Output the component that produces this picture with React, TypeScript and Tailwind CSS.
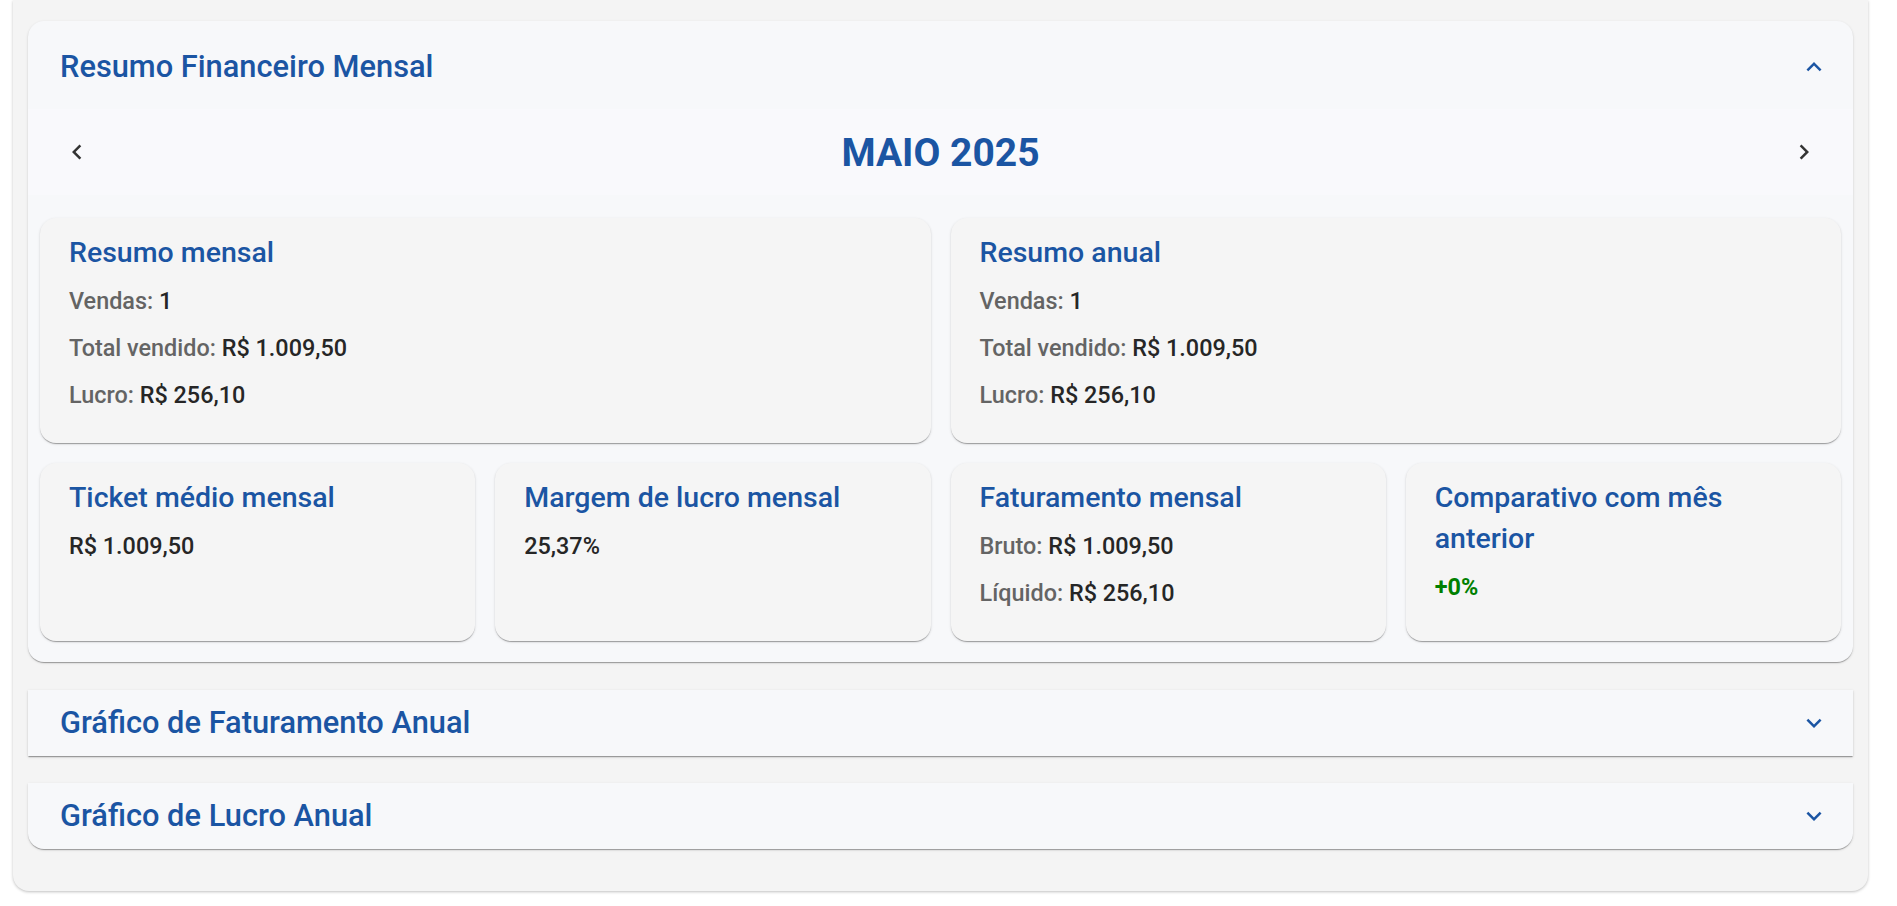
import React from 'react';

const BLUE = 'text-[#1b55a3]';

const ChevronLeftIcon = ({ className }: { className?: string }) => (
  <svg viewBox="0 0 24 24" className={className} fill="currentColor">
    <path d="M15.41 7.41 14 6l-6 6 6 6 1.41-1.41L10.83 12z" />
  </svg>
);

const ChevronRightIcon = ({ className }: { className?: string }) => (
  <svg viewBox="0 0 24 24" className={className} fill="currentColor">
    <path d="M10 6 8.59 7.41 13.17 12l-4.58 4.59L10 18l6-6z" />
  </svg>
);

const ExpandLessIcon = ({ className }: { className?: string }) => (
  <svg viewBox="0 0 24 24" className={className} fill="currentColor">
    <path d="m12 8-6 6 1.41 1.41L12 10.83l4.59 4.58L18 14z" />
  </svg>
);

const ExpandMoreIcon = ({ className }: { className?: string }) => (
  <svg viewBox="0 0 24 24" className={className} fill="currentColor">
    <path d="M16.59 8.59 12 13.17 7.41 8.59 6 10l6 6 6-6z" />
  </svg>
);

interface Linha {
  label?: string;
  value: string;
  destaque?: boolean;
}

const cardShadow =
  'shadow-[0_2px_1px_-1px_rgba(0,0,0,0.2),0_1px_1px_0_rgba(0,0,0,0.14),0_1px_3px_0_rgba(0,0,0,0.12)]';

const ResumoCard: React.FC<{ titulo: string; linhas: Linha[] }> = ({ titulo, linhas }) => (
  <div className={`bg-[#f5f5f5] rounded-[16px] pt-[14px] pb-[31px] px-[29px] ${cardShadow}`}>
    <h3 className={`text-[28.5px] leading-[41px] font-medium ${BLUE}`}>{titulo}</h3>
    <div className="mt-[11px] flex flex-col gap-[13px]">
      {linhas.map((l, i) => (
        <p key={i} className="text-[23.4px] leading-[34px] font-medium">
          {l.label && <span className="text-[#646464]">{l.label} </span>}
          <span className={l.destaque ? 'text-[#008000] font-bold' : 'text-[#262626]'}>{l.value}</span>
        </p>
      ))}
    </div>
  </div>
);

const AccordionHeader: React.FC<{ titulo: string; aberto?: boolean; altura: string }> = ({
  titulo,
  aberto,
  altura,
}) => (
  <div className={`flex items-center justify-between pl-[32px] pr-[24px] ${altura}`}>
    <h2 className={`text-[30.8px] font-medium ${BLUE}`}>{titulo}</h2>
    {aberto ? (
      <ExpandLessIcon className={`w-[30px] h-[30px] ${BLUE}`} />
    ) : (
      <ExpandMoreIcon className={`w-[30px] h-[30px] ${BLUE}`} />
    )}
  </div>
);

export default function App() {
  return (
    <div className="min-h-screen bg-white font-['Roboto',sans-serif]">
      <div className="ml-[13px] w-[1855px] bg-[#f4f4f4] rounded-b-[16px] pt-[21px] pb-[42px] px-[15px] shadow-[0_1px_3px_0_rgba(0,0,0,0.25)]">
        {/* Resumo mensal */}
        <section className={`bg-[#f7f8fa] rounded-[16px] ${cardShadow}`}>
          <AccordionHeader titulo="Resumo Financeiro Mensal" aberto altura="h-[88px] pt-[4px]" />

          <div className="h-[86px] bg-[#f9f9fc] flex items-center justify-between px-[34px]">
            <ChevronLeftIcon className="w-[30px] h-[30px] text-[#333]" />
            <h1 className={`text-[39px] font-bold pt-[2px] ${BLUE}`}>MAIO 2025</h1>
            <ChevronRightIcon className="w-[30px] h-[30px] text-[#333]" />
          </div>

          <div className="px-[12px] pt-[23px] pb-[21px] flex flex-col gap-[20px]">
            <div className="grid grid-cols-2 gap-[20px]">
              <ResumoCard
                titulo="Resumo mensal"
                linhas={[
                  { label: 'Vendas:', value: '1' },
                  { label: 'Total vendido:', value: 'R$ 1.009,50' },
                  { label: 'Lucro:', value: 'R$ 256,10' },
                ]}
              />
              <ResumoCard
                titulo="Resumo anual"
                linhas={[
                  { label: 'Vendas:', value: '1' },
                  { label: 'Total vendido:', value: 'R$ 1.009,50' },
                  { label: 'Lucro:', value: 'R$ 256,10' },
                ]}
              />
            </div>
            <div className="grid grid-cols-4 gap-[20px]">
              <ResumoCard titulo="Ticket médio mensal" linhas={[{ value: 'R$ 1.009,50' }]} />
              <ResumoCard titulo="Margem de lucro mensal" linhas={[{ value: '25,37%' }]} />
              <ResumoCard
                titulo="Faturamento mensal"
                linhas={[
                  { label: 'Bruto:', value: 'R$ 1.009,50' },
                  { label: 'Líquido:', value: 'R$ 256,10' },
                ]}
              />
              <ResumoCard titulo="Comparativo com mês anterior" linhas={[{ value: '+0%', destaque: true }]} />
            </div>
          </div>
        </section>

        <section className={`mt-[28px] bg-[#f7f8fa] ${cardShadow}`}>
          <AccordionHeader titulo="Gráfico de Faturamento Anual" altura="h-[66px]" />
        </section>

        <section className={`mt-[27px] bg-[#f7f8fa] rounded-b-[16px] ${cardShadow}`}>
          <AccordionHeader titulo="Gráfico de Lucro Anual" altura="h-[66px]" />
        </section>
      </div>
    </div>
  );
}
